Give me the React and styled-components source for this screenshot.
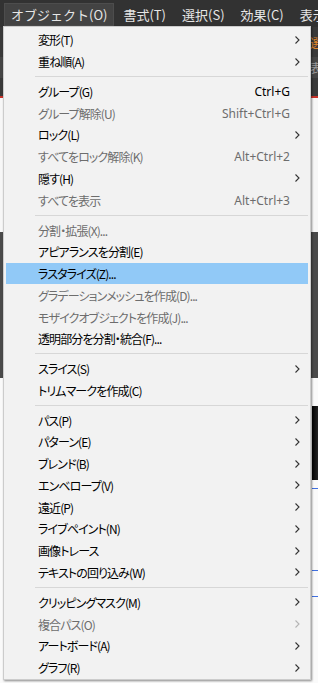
import React from 'react'
import styled, { createGlobalStyle } from 'styled-components'

const Global = createGlobalStyle`
  html, body {
    margin: 0;
    padding: 0;
    background: #323232;
  }
  * { box-sizing: border-box; }
`;

const Window = styled.div`
  position: relative;
  width: 318px;
  height: 683px;
  overflow: hidden;
  display: flex;
  flex-direction: column;
  background: #323232;
  font-family: "Noto Sans CJK JP", "Noto Sans", sans-serif;
`;

const MenuBar = styled.div`
  height: 27px;
  display: flex;
  align-items: flex-start;
  padding: 3px 0 0 4px;
  gap: 2px;
  background: #323232;
  flex-shrink: 0;
  overflow: hidden;
`;

const BarItem = styled.div`
  height: 23px;
  display: flex;
  align-items: center;
  padding: 0 6px;
  font-size: 13px;
  color: #e6e6e6;
  white-space: nowrap;
  flex-shrink: 0;
  background: ${p => (p.$open ? '#434343' : 'transparent')};
  border: 1px solid ${p => (p.$open ? '#4d4d4d' : 'transparent')};
`;

const Band = styled.div`
  height: ${p => p.$h}px;
  flex-shrink: 0;
  background: ${p => p.$bg};
  border-bottom: ${p => (p.$line ? `2px solid ${p.$line}` : 'none')};
  display: flex;
  align-items: center;
  padding-left: 310px;
  font-size: 12px;
  color: ${p => p.$fg || '#aaa'};
  white-space: nowrap;
  overflow: hidden;
`;

const Canvas = styled.div`
  flex: 1;
  background: #fafafa;
  display: flex;
  flex-direction: column;
  padding-left: 312px;
  padding-top: 108px;
`;

const Guide = styled.div`
  height: 1px;
  background: #3f6fe0;
  margin-bottom: ${p => p.$gap}px;
`;

const Shape = styled.div`
  width: 10px;
  height: 74px;
  margin: -80px 0 8px 0;
  background: linear-gradient(90deg, #000 0%, #222 60%, #999 100%);
`;

const Menu = styled.div`
  position: absolute;
  top: 26px;
  left: 3px;
  width: 308px;
  background: #f2f2f2;
  border: 1px solid #cccccc;
  padding: 2px 0 1px;
  box-shadow: 1px 1px 2px rgba(0, 0, 0, 0.45);
  font-size: 12px;
  font-feature-settings: "palt" 1;
`;

const Row = styled.div`
  height: 21.78px;
  margin: 0 2px;
  display: grid;
  grid-template-columns: 1fr auto 18px;
  align-items: center;
  padding-left: 32px;
  background: ${p => (p.$active ? '#91c9f7' : 'transparent')};
  color: ${p => (p.$disabled ? '#6d6d6d' : '#000')};
  white-space: nowrap;
`;

const Label = styled.span`
  letter-spacing: -0.9px;
`;

const Shortcut = styled.span`
  font-family: "Noto Sans", "Noto Sans CJK JP", sans-serif;
  font-size: 12px;
`;

const Arrow = styled.svg`
  width: 5px;
  height: 8px;
  margin-left: 5px;
`;

const Separator = styled.div`
  height: 8px;
  display: flex;
  align-items: center;
  padding: 0 2px 0 31px;

  &::after {
    content: '';
    flex: 1;
    height: 1px;
    background: #d7d7d7;
  }
`;

const items = [
  { label: '変形(T)', sub: true },
  { label: '重ね順(A)', sub: true },
  { sep: true },
  { label: 'グループ(G)', key: 'Ctrl+G' },
  { label: 'グループ解除(U)', key: 'Shift+Ctrl+G', off: true },
  { label: 'ロック(L)', sub: true },
  { label: 'すべてをロック解除(K)', key: 'Alt+Ctrl+2', off: true },
  { label: '隠す(H)', sub: true },
  { label: 'すべてを表示', key: 'Alt+Ctrl+3', off: true },
  { sep: true },
  { label: '分割・拡張(X)...', off: true },
  { label: 'アピアランスを分割(E)' },
  { label: 'ラスタライズ(Z)...', active: true },
  { label: 'グラデーションメッシュを作成(D)...', off: true },
  { label: 'モザイクオブジェクトを作成(J)...', off: true },
  { label: '透明部分を分割・統合(F)...' },
  { sep: true },
  { label: 'スライス(S)', sub: true },
  { label: 'トリムマークを作成(C)' },
  { sep: true },
  { label: 'パス(P)', sub: true },
  { label: 'パターン(E)', sub: true },
  { label: 'ブレンド(B)', sub: true },
  { label: 'エンベロープ(V)', sub: true },
  { label: '遠近(P)', sub: true },
  { label: 'ライブペイント(N)', sub: true },
  { label: '画像トレース', sub: true },
  { label: 'テキストの回り込み(W)', sub: true },
  { sep: true },
  { label: 'クリッピングマスク(M)', sub: true },
  { label: '複合パス(O)', sub: true, off: true },
  { label: 'アートボード(A)', sub: true },
  { label: 'グラフ(R)', sub: true },
]

const Chevron = ({ off }) => (
  <Arrow viewBox="0 0 5 8">
    <polyline points="0.5,0.5 4,4 0.5,7.5" fill="none" stroke={off ? '#b4b4b4' : '#333'} strokeWidth="1.1" />
  </Arrow>
)

const App = () => {
  return (
    <Window>
      <Global />
      <MenuBar>
        <BarItem $open>オブジェクト(O)</BarItem>
        <BarItem>書式(T)</BarItem>
        <BarItem>選択(S)</BarItem>
        <BarItem>効果(C)</BarItem>
        <BarItem>表示(V)</BarItem>
      </MenuBar>

      <Band $h={30} $bg="#393939" $fg="#e0862a">選択なし</Band>
      <Band $h={21} $bg="#454545" $fg="#9a9a9a">表示</Band>
      <Band $h={20} $bg="#393939" $line="#c8322a" />
      <Band $h={134} $bg="#f7f7f7" />
      <Band $h={146} $bg="#4a4a4a" />

      <Canvas>
        <Shape />
        <Guide $gap={81} />
        <Guide $gap={25} />
        <Guide $gap={0} />
      </Canvas>

      <Menu>
        {items.map((it, i) =>
          it.sep ? (
            <Separator key={i} />
          ) : (
            <Row key={i} $active={it.active} $disabled={it.off}>
              <Label>{it.label}</Label>
              <Shortcut>{it.key}</Shortcut>
              {it.sub ? <Chevron off={it.off} /> : <span />}
            </Row>
          )
        )}
      </Menu>
    </Window>
  )
}

export default App
